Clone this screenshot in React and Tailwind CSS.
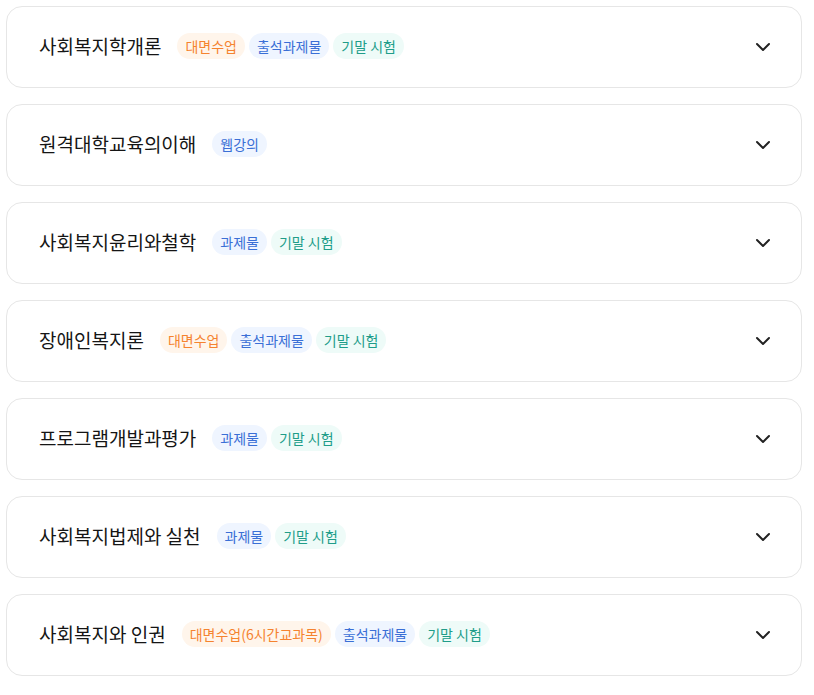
import { ChevronDown } from "lucide-react";

const courses = [
  { title: "사회복지학개론", tags: ["face", "attend", "exam"] },
  { title: "원격대학교육의이해", tags: ["web"] },
  { title: "사회복지윤리와철학", tags: ["task", "exam"] },
  { title: "장애인복지론", tags: ["face", "attend", "exam"] },
  { title: "프로그램개발과평가", tags: ["task", "exam"] },
  { title: "사회복지법제와 실천", tags: ["task", "exam"] },
  { title: "사회복지와 인권", tags: ["face6", "attend", "exam"] },
];

const tagStyles = {
  face: { label: "대면수업", className: "bg-[#fff5eb] text-[#f5832f]" },
  face6: { label: "대면수업(6시간교과목)", className: "bg-[#fff5eb] text-[#f5832f]" },
  attend: { label: "출석과제물", className: "bg-[#eff5ff] text-[#3a6fd6]" },
  task: { label: "과제물", className: "bg-[#eff5ff] text-[#3a6fd6]" },
  web: { label: "웹강의", className: "bg-[#eff5ff] text-[#3a6fd6]" },
  exam: { label: "기말 시험", className: "bg-[#eefbf8] text-[#209d89]" },
};

const Tag = ({ type }) => {
  const t = tagStyles[type];
  return (
    <span
      className={`inline-flex items-center h-[26px] px-2 rounded-full text-[14px] leading-none ${t.className}`}
    >
      {t.label}
    </span>
  );
};

const CourseRow = ({ course }) => (
  <div className="flex items-center h-[82px] pl-8 pr-[26px] bg-white border border-[#e6e6e6] rounded-2xl">
    <div className="flex items-center flex-1 min-w-0">
      <span className="text-[19px] text-[#151515] mr-4 -translate-y-px">{course.title}</span>
      <div className="flex items-center gap-1 -translate-y-px">
        {course.tags.map((tag) => (
          <Tag key={tag} type={tag} />
        ))}
      </div>
    </div>
    <ChevronDown className="w-6 h-6 text-[#222222]" strokeWidth={2} />
  </div>
);

export default function App() {
  return (
    <div
      className="min-h-screen bg-white pt-1.5 pl-1.5 pr-3"
      style={{ fontFamily: '"Noto Sans CJK KR", "Noto Sans", sans-serif' }}
    >
      <div className="flex flex-col gap-4">
        {courses.map((c) => (
          <CourseRow key={c.title} course={c} />
        ))}
      </div>
    </div>
  );
}
